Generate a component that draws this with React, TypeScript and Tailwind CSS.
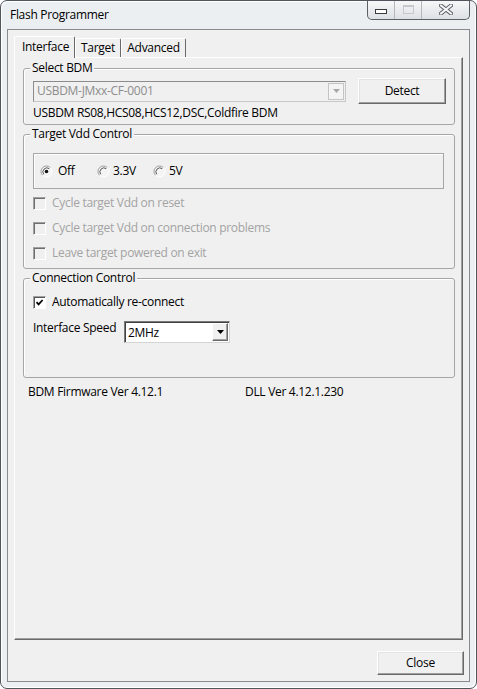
import React from "react";

const Radio = ({ checked }: { checked?: boolean }) => (
  <svg width="13" height="13" viewBox="0 0 13 13" className="shrink-0">
    <circle cx="6.5" cy="6.5" r="5.5" fill="#f4f4f4" />
    <path d="M10.4 2.6 A5.5 5.5 0 0 0 2.6 10.4" fill="none" stroke="#9a9a9a" strokeWidth="1" />
    <path d="M9.3 3.7 A4 4 0 0 0 3.7 9.3" fill="none" stroke="#555555" strokeWidth="1" />
    <path d="M2.6 10.4 A5.5 5.5 0 0 0 10.4 2.6" fill="none" stroke="#ffffff" strokeWidth="1" />
    {checked && <circle cx="6.5" cy="6.5" r="1.8" fill="#111111" />}
  </svg>
);

const Checkbox = ({
  checked,
  disabled,
}: {
  checked?: boolean;
  disabled?: boolean;
}) => (
  <span
    className={
      disabled
        ? "shrink-0 flex items-center justify-center w-[13px] h-[13px] border border-t-[#a0a0a0] border-l-[#a0a0a0] border-r-white border-b-white shadow-[inset_1px_1px_0_#6e6e6e] bg-[#f0f0f0]"
        : "shrink-0 flex items-center justify-center w-[13px] h-[13px] border border-t-[#a0a0a0] border-l-[#a0a0a0] border-r-white border-b-white shadow-[inset_1px_1px_0_#555555] bg-white"
    }
  >
    {checked && (
      <svg width="9" height="9" viewBox="0 0 9 9">
        <path d="M1.5 4.2 L3.6 6.4 L7.6 2" fill="none" stroke="#000" strokeWidth="1.7" />
      </svg>
    )}
  </span>
);

const DropArrow = ({ color }: { color: string }) => (
  <svg width="7" height="4" viewBox="0 0 7 4">
    <path d="M0 0 H7 L3.5 4 Z" fill={color} />
  </svg>
);

const WinButton = ({ label, className }: { label: string; className: string }) => (
  <button
    className={
      "flex items-center justify-center bg-[#f0f0f0] border border-t-white border-l-white border-r-[#696969] border-b-[#696969] shadow-[inset_-1px_-1px_0_#a0a0a0,inset_1px_1px_0_#e3e3e3] " +
      className
    }
  >
    {label}
  </button>
);

export default function App() {
  return (
    <div className="w-[477px] h-[689px] flex flex-col px-[6px] pb-[6px] border border-[#50555b] rounded-[7px] overflow-hidden bg-[#eceff2] shadow-[inset_1px_1px_0_#ffffff,inset_-1px_-1px_0_#ffffff] font-['Segoe_UI','Open_Sans',sans-serif] text-[12px] leading-[16px] tracking-[-0.3px] text-black">
      {/* title bar */}
      <div className="h-[28px] flex items-start justify-between">
        <div className="pt-[6px] pl-[3px]">Flash Programmer</div>
        <div className="-mt-[1px] flex h-[20px] border-x border-b border-[#5c6066] rounded-b-[5px] overflow-hidden bg-linear-to-b from-[#f7f8f9] to-[#dde1e5]">
          <div className="w-[27px] flex items-center justify-center border-r border-[#b4b8bd]">
            <span className="mt-[4px] w-[12px] h-[5px] border border-[#3a3a3a] bg-white" />
          </div>
          <div className="w-[27px] flex items-center justify-center border-r border-[#b4b8bd]">
            <span className="w-[11px] h-[9px] border border-t-2 border-[#c6c8cb]" />
          </div>
          <div className="w-[47px] flex items-center justify-center">
            <svg width="14" height="11" viewBox="0 0 14 11">
              <path d="M2 1.5 L12 9.5 M12 1.5 L2 9.5" stroke="#5b5f64" strokeWidth="4" strokeLinecap="square" />
              <path d="M2 1.5 L12 9.5 M12 1.5 L2 9.5" stroke="#f4f5f6" strokeWidth="2" strokeLinecap="square" />
            </svg>
          </div>
        </div>
      </div>

      {/* client */}
      <div className="flex-1 flex flex-col border border-[#878b90] bg-[#f0f0f0] px-[6px] pt-[6px] pb-[6px]">
        {/* tabs */}
        <div className="flex items-end h-[21px]">
          <div className="relative z-10 -mb-[1px] h-[22px] w-[61px] pl-[7px] pt-[2px] bg-[#f0f0f0] border-l border-t border-white border-r border-r-[#696969] rounded-t-[2px]">
            Interface
          </div>
          <div className="h-[19px] w-[46px] pt-[1px] text-center border-l border-t border-white border-r border-r-[#696969] rounded-t-[2px]">
            Target
          </div>
          <div className="h-[19px] w-[65px] pt-[1px] text-center border-l border-t border-white border-r border-r-[#696969] rounded-t-[2px]">
            Advanced
          </div>
        </div>

        {/* tab panel */}
        <div className="flex-1 flex flex-col border border-t-white border-l-white border-r-[#696969] border-b-[#696969] shadow-[inset_-1px_-1px_0_#a0a0a0] pl-[8px] pr-[7px]">
          <fieldset className="mt-[2px] border border-[#a6a6a6] rounded-[3px] shadow-[inset_1px_1px_0_#ffffff] pl-[9px] pr-[8px] pt-[2px] pb-[3px]">
            <legend className="-ml-[3px] px-[2px] bg-[#f0f0f0]">Select BDM</legend>
            <div className="flex items-center h-[26px]">
              <div className="w-[313px] h-[21px] flex items-center border border-t-[#8c8c8c] border-l-[#8c8c8c] border-r-[#c8c8c8] border-b-[#c8c8c8] bg-[#f0f0f0]">
                <span className="flex-1 pl-[3px] text-[#8d8d8d]">USBDM-JMxx-CF-0001</span>
                <span className="mr-[1px] w-[16px] h-[17px] flex items-center justify-center border border-[#c4c4c4] bg-[#f4f4f4]">
                  <DropArrow color="#a8a8a8" />
                </span>
              </div>
              <WinButton label="Detect" className="ml-auto w-[88px] h-[26px]" />
            </div>
            <div className="mt-[1px]">USBDM RS08,HCS08,HCS12,DSC,Coldfire BDM</div>
          </fieldset>

          <fieldset className="mt-[1px] border border-[#a6a6a6] rounded-[3px] shadow-[inset_1px_1px_0_#ffffff] pl-[9px] pr-[8px] pt-[11px] pb-[7px]">
            <legend className="-ml-[3px] px-[2px] bg-[#f0f0f0]">Target Vdd Control</legend>
            <div className="w-[411px] h-[36px] flex items-center pl-[6px] border border-[#a6a6a6] shadow-[inset_1px_1px_0_#ffffff]">
              <div className="w-[57px] flex items-center gap-[5px]">
                <Radio checked />
                <span>Off</span>
              </div>
              <div className="w-[56px] flex items-center gap-[3px]">
                <Radio />
                <span>3.3V</span>
              </div>
              <div className="flex items-center gap-[3px]">
                <Radio />
                <span>5V</span>
              </div>
            </div>
            <div className="mt-[6px] h-[16px] flex items-center gap-[6px] text-[#a3a3a3]">
              <Checkbox disabled />
              <span>Cycle target Vdd on reset</span>
            </div>
            <div className="mt-[9px] h-[16px] flex items-center gap-[6px] text-[#a3a3a3]">
              <Checkbox disabled />
              <span>Cycle target Vdd on connection problems</span>
            </div>
            <div className="mt-[9px] h-[16px] flex items-center gap-[6px] text-[#a3a3a3]">
              <Checkbox disabled />
              <span>Leave target powered on exit</span>
            </div>
          </fieldset>

          <fieldset className="mt-[1px] border border-[#a6a6a6] rounded-[3px] shadow-[inset_1px_1px_0_#ffffff] pl-[9px] pr-[8px] pt-[8px] pb-[34px]">
            <legend className="-ml-[3px] px-[2px] bg-[#f0f0f0]">Connection Control</legend>
            <div className="h-[16px] flex items-center gap-[6px]">
              <Checkbox checked />
              <span>Automatically re-connect</span>
            </div>
            <div className="mt-[10px] flex items-start">
              <span className="w-[91px]">Interface Speed</span>
              <div className="mt-[1px] w-[106px] h-[22px] flex items-center border border-t-[#7a7a7a] border-l-[#7a7a7a] border-r-[#d4d4d4] border-b-[#d4d4d4] shadow-[inset_1px_1px_0_#404040] bg-white">
                <span className="flex-1 pl-[3px] pt-[2px]">2MHz</span>
                <span className="mr-[1px] w-[16px] h-[18px] flex items-center justify-center bg-[#f0f0f0] border border-t-white border-l-white border-r-[#696969] border-b-[#696969] shadow-[inset_-1px_-1px_0_#a0a0a0]">
                  <DropArrow color="#000000" />
                </span>
              </div>
            </div>
          </fieldset>

          <div className="mt-[6px] pl-[5px] flex">
            <span className="w-[217px]">BDM Firmware Ver 4.12.1</span>
            <span>DLL Ver 4.12.1.230</span>
          </div>
        </div>

        {/* bottom buttons */}
        <div className="flex justify-end pt-[11px] -mr-[1px]">
          <WinButton label="Close" className="w-[87px] h-[24px]" />
        </div>
      </div>
    </div>
  );
}
